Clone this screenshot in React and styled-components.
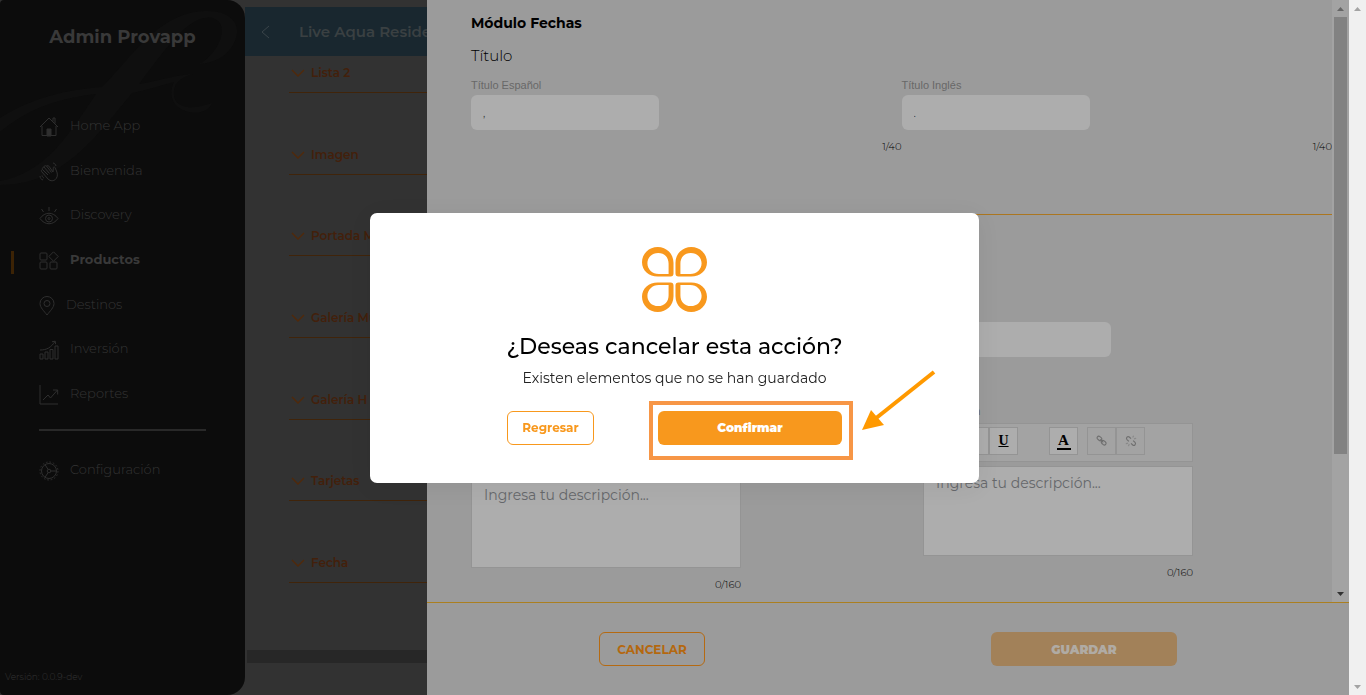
import React, { useState } from "react";
import styled, { createGlobalStyle } from "styled-components";

const menu = [
  { id: "home", name: "Home App" },
  { id: "hand", name: "Bienvenida" },
  { id: "eye", name: "Discovery" },
  { id: "grid", name: "Productos" },
  { id: "pin", name: "Destinos" },
  { id: "bars", name: "Inversión" },
  { id: "chart", name: "Reportes" },
];

const modules = [
  "Lista 2",
  "Imagen",
  "Portada Mapa",
  "Galería Mu",
  "Galería H",
  "Tarjetas",
  "Fecha",
];

const icons = {
  home: (
    <>
      <path d="M1 10 10 1l9 9M3 9v9.500h14V9M14 4.500V1h2v5.500" />
      <path d="M8 12h4v7H8z" fill="currentColor" />
    </>
  ),
  hand: (
    <>
      <path d="m9 13-5.500-5.500M10.500 11.500 5 5M12.500 10.500 7.500 4M14 10l-3.500-5" />
      <path d="M3.500 7.500C2.200 7.800 2 9 3 10l6 7c2.500 2.500 6 2.300 8-.2 2-2.500 1.500-5.300.5-7.800L16 5.500c-.7-1-2-.5-1.700.7L14 10M5 5C3.500 5.200 3 6.500 3.500 7.500M7.500 4C6.200 3.300 5 4 5 5M10.500 5C9.800 3.500 8.200 3.300 7.500 4" />
      <path d="M1 14c0 2 1 3.300 3 4M3 13.500c.2 1.200.8 2 2 2.500M14 1c1.500.2 2.500 1.200 3 3" />
    </>
  ),
  eye: (
    <>
      <path d="M1 12.500c4.800-7 13.200-7 18 0-4.800 7-13.200 7-18 0z" />
      <circle cx="10" cy="12.500" r="3.500" />
      <circle cx="10" cy="12.500" r="1" />
      <path d="M10 1v4M2.500 3l2 3M17.500 3l-2 3" />
    </>
  ),
  grid: (
    <>
      <rect x="1" y="2" width="7" height="7" rx="1" />
      <rect x="1" y="11" width="7" height="7" rx="1" />
      <rect x="11" y="11" width="7" height="7" rx="1" />
      <path d="m14.500.8 4.700 4.700-4.700 4.700-4.700-4.700z" />
    </>
  ),
  pin: (
    <>
      <path d="M8 19C5 15 1 11.500 1 7.500a7 7 0 0 1 14 0C15 11.500 11 15 8 19z" />
      <circle cx="8" cy="7.500" r="3" />
    </>
  ),
  bars: (
    <path d="M1 19v-5h3v5zM6 19v-7h3v7zM11 19V9.500h3V19zM16 19V6h3v13zM1 10c7 0 11-2.500 15-8.500M13 1.800l3.200-.6.400 3" />
  ),
  chart: (
    <path d="M1 0v19h18M4 15l5-5 2.500 3L18.500 5M14 5h4.700v4.500" />
  ),
  gear: (
    <>
      <circle cx="10" cy="10" r="7.500" />
      <circle cx="10" cy="10" r="9" strokeDasharray="1.700 1.842" />
      <circle cx="10" cy="10" r="1.800" />
      <path d="M12 10h5.500M9 8.300 6 3.600M9 11.700l-3 4.700" />
    </>
  ),
};

function MenuIcon({ name }) {
  const narrow = name === "pin";
  return (
    <MenuSvg viewBox={narrow ? "0 0 16 20" : "0 0 20 20"} $narrow={narrow}>
      {icons[name]}
    </MenuSvg>
  );
}

function ScrollBar({ dark }) {
  return (
    <ScrollTrack $dark={dark}>
      <ScrollArrow viewBox="0 0 17 17" $dark={dark}>
        <path d="M5 11h7L8.500 7z" />
      </ScrollArrow>
      <ScrollRail>{dark ? <ScrollThumb /> : null}</ScrollRail>
      <ScrollArrow viewBox="0 0 17 17" $dark={dark} $end>
        <path d="M5 7h7l-3.500 4z" />
      </ScrollArrow>
    </ScrollTrack>
  );
}

function TitleField({ id, label, initial }) {
  const [text, setText] = useState(initial);
  return (
    <Field>
      <FieldLabel htmlFor={id}>{label}</FieldLabel>
      <TextInput
        id={id}
        value={text}
        maxLength={40}
        onChange={(e) => setText(e.target.value)}
      />
      <Counter>{text.length}/40</Counter>
    </Field>
  );
}

function DescriptionField({ id, label, tall }) {
  const [text, setText] = useState("");
  return (
    <EditorField>
      <TextInput aria-label="Título" />
      <EditorLabel htmlFor={id} $tall={tall}>
        {label}
      </EditorLabel>
      <Toolbar>
        <ToolGroup>
          <ToolBtn aria-label="Negrita">
            <b>B</b>
          </ToolBtn>
          <ToolBtn aria-label="Cursiva">
            <i>I</i>
          </ToolBtn>
          <ToolBtn aria-label="Subrayado">
            <u>U</u>
          </ToolBtn>
        </ToolGroup>
        <ToolGroup>
          <ToolBtn aria-label="Color">
            <ColorMark>A</ColorMark>
          </ToolBtn>
        </ToolGroup>
        <LinkGroup>
          <ToolBtn aria-label="Enlace" disabled>
            <ToolSvg viewBox="0 0 14 14">
              <rect x="1" y="2" width="6" height="4" rx="2" transform="rotate(40 4 4)" />
              <rect x="6" y="7" width="6" height="4" rx="2" transform="rotate(40 9 9)" />
              <path d="m5 5 3.500 3.500" />
            </ToolSvg>
          </ToolBtn>
          <ToolBtn aria-label="Quitar enlace" disabled>
            <ToolSvg viewBox="0 0 14 14">
              <path d="M4.500 7.500 2.300 5.300C.7 3.500 3 .9 5 2.300L7 4.200M9.500 6.500l2.200 2.200c1.600 1.800-.7 4.400-2.700 3L7 9.800" />
              <path d="M9 3l1-2M10.500 4.500l2.500-.8M5 10.500 4 13M3.500 9.500l-2.500.8" opacity="0.5" />
            </ToolSvg>
          </ToolBtn>
        </LinkGroup>
      </Toolbar>
      <Editor
        id={id}
        placeholder="Ingresa tu descripción..."
        value={text}
        maxLength={160}
        onChange={(e) => setText(e.target.value)}
      />
      <Counter>{text.length}/160</Counter>
    </EditorField>
  );
}

export default function App() {
  const [modalOpen, setModalOpen] = useState(true);

  return (
    <>
      <GlobalStyle />
      <Page>
        <Sidebar>
          <Swash viewBox="0 0 245 190">
            <path d="M0 118C35 96 68 90 102 87 130 60 158 12 205 11c28-1 38 16 29 32-7 14-20 20-35 21 20-10 32-40 14-46-24-5-48 32-74 66 20-3 36-9 54-10-14 4-20 10-19 21 1 12 15 16 38 8-4 12-24 12-34 4-8-6-8-18-4-25-12 3-26 8-42 11-36 44-70 92-132 92v-4c44-8 66-42 96-87-35 4-68 14-96 38z" />
          </Swash>
          <Brand>Admin Provapp</Brand>
          <Menu>
            {menu.map((el) => (
              <MenuLink key={el.id} href="#" $active={el.id === "grid"}>
                <MenuIcon name={el.id} />
                <span>{el.name}</span>
              </MenuLink>
            ))}
          </Menu>
          <MenuLine />
          <MenuLink href="#">
            <MenuIcon name="gear" />
            <span>Configuración</span>
          </MenuLink>
          <Version>Versión: 0.0.9-dev</Version>
        </Sidebar>

        <Content>
          <ContentHeader>
            <BackBtn aria-label="Regresar a productos">
              <svg width="9" height="14" viewBox="0 0 9 14">
                <path d="M8 1 1 7l7 6" />
              </svg>
            </BackBtn>
            <ContentTitle>Live Aqua Residence</ContentTitle>
          </ContentHeader>
          <ModuleList>
            {modules.map((el) => (
              <ModuleItem key={el}>
                <svg width="14" height="8" viewBox="0 0 14 8">
                  <path d="m1 1 6 6 6-6" />
                </svg>
                {el}
              </ModuleItem>
            ))}
          </ModuleList>
          <ContentScroll />
        </Content>

        <Drawer>
          <DrawerTop>
            <DrawerBody>
              <Section>
                <DrawerTitle>Módulo Fechas</DrawerTitle>
                <SubTitle>Título</SubTitle>
                <FieldRow>
                  <TitleField id="title-es" label="Título Español" initial="," />
                  <TitleField id="title-en" label="Título Inglés" initial="." />
                </FieldRow>
              </Section>
              <EditorSection>
                <DescriptionField id="desc-es" label="Descripción" tall />
                <DescriptionField id="desc-en" label="Descripción" />
              </EditorSection>
            </DrawerBody>
            <ScrollBar dark />
          </DrawerTop>
          <DrawerFooter>
            <CancelBtn>CANCELAR</CancelBtn>
            <SaveBtn>GUARDAR</SaveBtn>
          </DrawerFooter>
        </Drawer>
        <ScrollBar />
      </Page>

      {modalOpen ? (
        <Overlay>
          <Modal role="dialog" aria-labelledby="modal-title">
            <Logo viewBox="0 0 66 66">
              <LogoPetal />
              <LogoPetal turn="translate(66 0) scale(-1 1)" />
              <LogoPetal turn="translate(0 66) scale(1 -1)" />
              <LogoPetal turn="translate(66 66) scale(-1 -1)" />
            </Logo>
            <ModalTitle id="modal-title">¿Deseas cancelar esta acción?</ModalTitle>
            <ModalText>Existen elementos que no se han guardado</ModalText>
            <ModalActions>
              <BackModalBtn onClick={() => setModalOpen(false)}>
                Regresar
              </BackModalBtn>
              <Highlight>
                <ConfirmBtn onClick={() => setModalOpen(false)}>
                  Confirmar
                </ConfirmBtn>
                <Arrow viewBox="0 0 76 62">
                  <path d="M73 2 14 49" stroke="#ff9900" strokeWidth="4" />
                  <path d="M1 60 10 40l13 15z" fill="#ff9900" />
                </Arrow>
              </Highlight>
            </ModalActions>
          </Modal>
        </Overlay>
      ) : null}
    </>
  );
}

function LogoPetal({ turn }) {
  return (
    <path
      transform={turn}
      fillRule="evenodd"
      d="M16 0C7 0 0 7 0 15.500 0 24 7 30 16 30h13c2 0 3-1 3-3V16C32 7 25 0 16 0zM16.500 6C10 6 5.500 10.500 5.500 16.500S10.500 27.500 17 27.500H27V17C27 10.500 23 6 16.500 6z"
    />
  );
}

const GlobalStyle = createGlobalStyle`
  * {
    box-sizing: border-box;
  }
  body {
    margin: 0;
    background: #323232;
    font-family: Montserrat, Inter, sans-serif;
  }
  button, input, textarea {
    font-family: inherit;
  }
  button {
    cursor: pointer;
    padding: 0;
  }
`;

const Page = styled.div`
  display: grid;
  grid-template-columns: 245px 182px minmax(0, 1fr) 17px;
  height: 100vh;
  overflow: hidden;
`;

// Sidebar
const Sidebar = styled.aside`
  position: relative;
  display: flex;
  flex-direction: column;
  background: #0c0c0c;
  border-radius: 4px 18px 18px 4px;
  color: #2a2a2a;
  overflow: hidden;
`;

const Swash = styled.svg`
  position: absolute;
  top: 0;
  left: 0;
  width: 100%;
  fill: #0f0f0f;
`;

const Brand = styled.h1`
  position: relative;
  margin: 25px 0 54px;
  font-size: 18px;
  line-height: 24px;
  font-weight: 700;
  text-align: center;
  color: #393939;
`;

const Menu = styled.nav`
  display: grid;
  grid-template-rows: repeat(7, 1fr);
  height: 312px;
`;

const MenuLink = styled.a`
  position: relative;
  display: flex;
  align-items: center;
  gap: 11px;
  padding-left: 39px;
  font-size: 13px;
  line-height: 20px;
  font-weight: ${(props) => (props.$active ? 700 : 300)};
  color: ${(props) => (props.$active ? "#393939" : "#343434")};
  text-decoration: none;
  &::before {
    content: "";
    display: ${(props) => (props.$active ? "block" : "none")};
    position: absolute;
    bottom: 7px;
    left: 11px;
    width: 3px;
    height: 23px;
    background: #3c2305;
  }
`;

const MenuSvg = styled.svg`
  width: ${(props) => (props.$narrow ? "16px" : "20px")};
  height: 20px;
  margin-top: 4px;
  overflow: visible;
  fill: none;
  stroke: #2f2f2f;
  color: #2f2f2f;
`;

const MenuLine = styled.hr`
  width: 167px;
  height: 2px;
  margin: 14px 39px 26px;
  border: none;
  background: #292929;
`;

const Version = styled.p`
  margin: auto 0 12px 5px;
  font-size: 9px;
  line-height: 12px;
  font-weight: 300;
  color: #343434;
`;

// Product modules
const Content = styled.main`
  display: flex;
  flex-direction: column;
  min-width: 0;
  overflow: hidden;
  white-space: nowrap;
`;

const ContentHeader = styled.header`
  display: flex;
  align-items: center;
  gap: 29px;
  flex: none;
  height: 49px;
  margin-top: 7px;
  padding-left: 16px;
  background: #19272f;
`;

const BackBtn = styled.button`
  border: none;
  background: none;
  line-height: 0;
  svg {
    fill: none;
    stroke: #3a4449;
  }
`;

const ContentTitle = styled.h2`
  margin: 0;
  min-width: 0;
  overflow: hidden;
  font-size: 15px;
  line-height: 20px;
  font-weight: 600;
  color: #3a4042;
`;

const ModuleList = styled.ul`
  display: grid;
  grid-template-rows: 37px repeat(6, 1fr);
  flex: none;
  height: 527px;
  margin: 0 0 67px 44px;
  padding: 0;
`;

const ModuleItem = styled.li`
  display: flex;
  align-items: flex-end;
  gap: 6px;
  padding: 0 0 9px 2px;
  border-bottom: 1px solid #40240a;
  font-size: 12px;
  line-height: 20px;
  font-weight: 600;
  color: #43200b;
  svg {
    flex: none;
    margin-bottom: 6px;
    fill: none;
    stroke: #50290a;
    stroke-width: 1.4;
  }
`;

const ContentScroll = styled.div`
  flex: none;
  height: 13px;
  margin-left: 2px;
  background: #272727;
`;

// Drawer
const Drawer = styled.section`
  display: flex;
  flex-direction: column;
  min-width: 0;
  background: #9b9b9b;
`;

const DrawerTop = styled.div`
  display: flex;
  flex: 1;
  min-height: 0;
`;

const DrawerBody = styled.div`
  flex: 1;
  min-width: 0;
  overflow: hidden;
`;

const Section = styled.div`
  height: 215px;
  padding: 13px 0 0 44px;
  border-bottom: 1px solid #ab7620;
`;

const DrawerTitle = styled.h2`
  margin: 0;
  font-size: 14px;
  line-height: 20px;
  font-weight: 700;
`;

const SubTitle = styled.h3`
  margin: 13px 0 12px;
  font-size: 15px;
  line-height: 20px;
  font-weight: 300;
`;

const FieldRow = styled.div`
  display: grid;
  grid-template-columns: 1fr 1fr;
`;

const Field = styled.div`
  display: flex;
  flex-direction: column;
`;

const FieldLabel = styled.label`
  margin-bottom: 2px;
  font-family: "Liberation Sans", Arial, sans-serif;
  font-size: 11px;
  line-height: 15px;
  color: #686868;
`;

const TextInput = styled.input`
  width: 188px;
  height: 35px;
  padding: 0 12px;
  border: none;
  border-radius: 6px;
  background: #adadad;
  font-size: 11px;
  color: #3c3c3c;
  outline: none;
`;

const Counter = styled.span`
  align-self: flex-end;
  margin-top: 11px;
  font-size: 10px;
  line-height: 12px;
  font-weight: 300;
  color: #000;
`;

const EditorSection = styled.div`
  display: flex;
  align-items: flex-start;
  gap: 182px;
  padding: 107px 0 0 44px;
`;

const EditorField = styled(Field)`
  width: 270px;
`;

const EditorLabel = styled(FieldLabel)`
  height: ${(props) => (props.$tall ? "27px" : "15px")};
  margin: 47px 0 4px;
`;

const Toolbar = styled.div`
  display: flex;
  align-items: flex-start;
  gap: 31px;
  height: 39px;
  padding: 3px 7px;
  border: 1px solid #949494;
  background: #a3a3a3;
`;

const ToolGroup = styled.div`
  display: flex;
`;

const LinkGroup = styled(ToolGroup)`
  margin-left: -22px;
`;

const ToolBtn = styled.button`
  display: grid;
  place-items: center;
  width: 29px;
  height: 28px;
  border: 1px solid #949494;
  background: ${(props) => (props.disabled ? "#a3a3a3" : "#adadad")};
  font-family: "Liberation Serif", serif;
  font-size: 14px;
  font-weight: 700;
  color: #000;
`;

const ColorMark = styled.span`
  width: 14px;
  border-bottom: 2px solid #000;
  font-size: 15px;
  line-height: 16px;
`;

const ToolSvg = styled.svg`
  width: 12px;
  height: 12px;
  fill: none;
  stroke: #6f6f6f;
  stroke-width: 1.3;
`;

const Editor = styled.textarea`
  height: 90px;
  margin-top: 4px;
  padding: 6px 12px;
  border: 1px solid #949494;
  border-radius: 0;
  background: #adadad;
  font-size: 14px;
  line-height: 20px;
  resize: none;
  outline: none;
  &::placeholder {
    color: #66686b;
  }
`;

const DrawerFooter = styled.footer`
  display: flex;
  align-items: center;
  justify-content: center;
  gap: 286px;
  height: 93px;
  border-top: 1px solid #ab7f20;
`;

const Button = styled.button`
  height: 34px;
  border: none;
  border-radius: 6px;
  font-size: 12px;
  font-weight: 700;
`;

const CancelBtn = styled(Button)`
  width: 106px;
  border: 1px solid #b56a12;
  background: none;
  color: #b4680f;
`;

const SaveBtn = styled(Button)`
  width: 186px;
  background: #a28159;
  font-weight: 900;
  color: #b0aba4;
`;

// Scroll bars
const ScrollTrack = styled.div`
  display: flex;
  flex-direction: column;
  width: 17px;
  background: ${(props) => (props.$dark ? "#a3a3a3" : "#f0f0f0")};
`;

const ScrollArrow = styled.svg`
  flex: none;
  width: 17px;
  height: 17px;
  fill: ${(props) =>
    props.$dark ? (props.$end ? "#333" : "#666") : "#a3a3a3"};
`;

const ScrollRail = styled.div`
  flex: 1;
  padding: 0 2px;
`;

const ScrollThumb = styled.div`
  height: 77%;
  background: #828282;
`;

// Modal
const Overlay = styled.div`
  position: fixed;
  inset: 0 17px 0 0;
  display: flex;
  align-items: center;
  justify-content: center;
`;

const Modal = styled.div`
  display: flex;
  flex-direction: column;
  align-items: center;
  width: 609px;
  padding: 34px 0 38px;
  border-radius: 7px;
  background: #fff;
  box-shadow: 0 4px 24px rgba(0, 0, 0, 0.06);
`;

const Logo = styled.svg`
  width: 65px;
  height: 65px;
  fill: #f8981d;
`;

const ModalTitle = styled.h2`
  margin: 21px 0 7px;
  font-size: 22px;
  line-height: 28px;
  font-weight: 500;
`;

const ModalText = styled.p`
  margin: 0 0 23px;
  font-size: 14px;
  line-height: 20px;
  font-weight: 400;
  color: #222;
`;

const ModalActions = styled.div`
  display: flex;
  justify-content: space-between;
  width: 335px;
`;

const BackModalBtn = styled(Button)`
  width: 87px;
  border: 1px solid #f8981d;
  background: #fff;
  color: #f8981d;
`;

const Highlight = styled.div`
  position: relative;
  &::before {
    content: "";
    position: absolute;
    inset: -10px -11px -15px -9px;
    border: 4px solid #f79646;
    pointer-events: none;
  }
`;

const ConfirmBtn = styled(Button)`
  display: block;
  width: 184px;
  background: #f8981d;
  font-weight: 900;
  color: #fff;
`;

const Arrow = styled.svg`
  position: absolute;
  top: -41px;
  left: 203px;
  width: 76px;
  height: 62px;
  fill: none;
  pointer-events: none;
`;
